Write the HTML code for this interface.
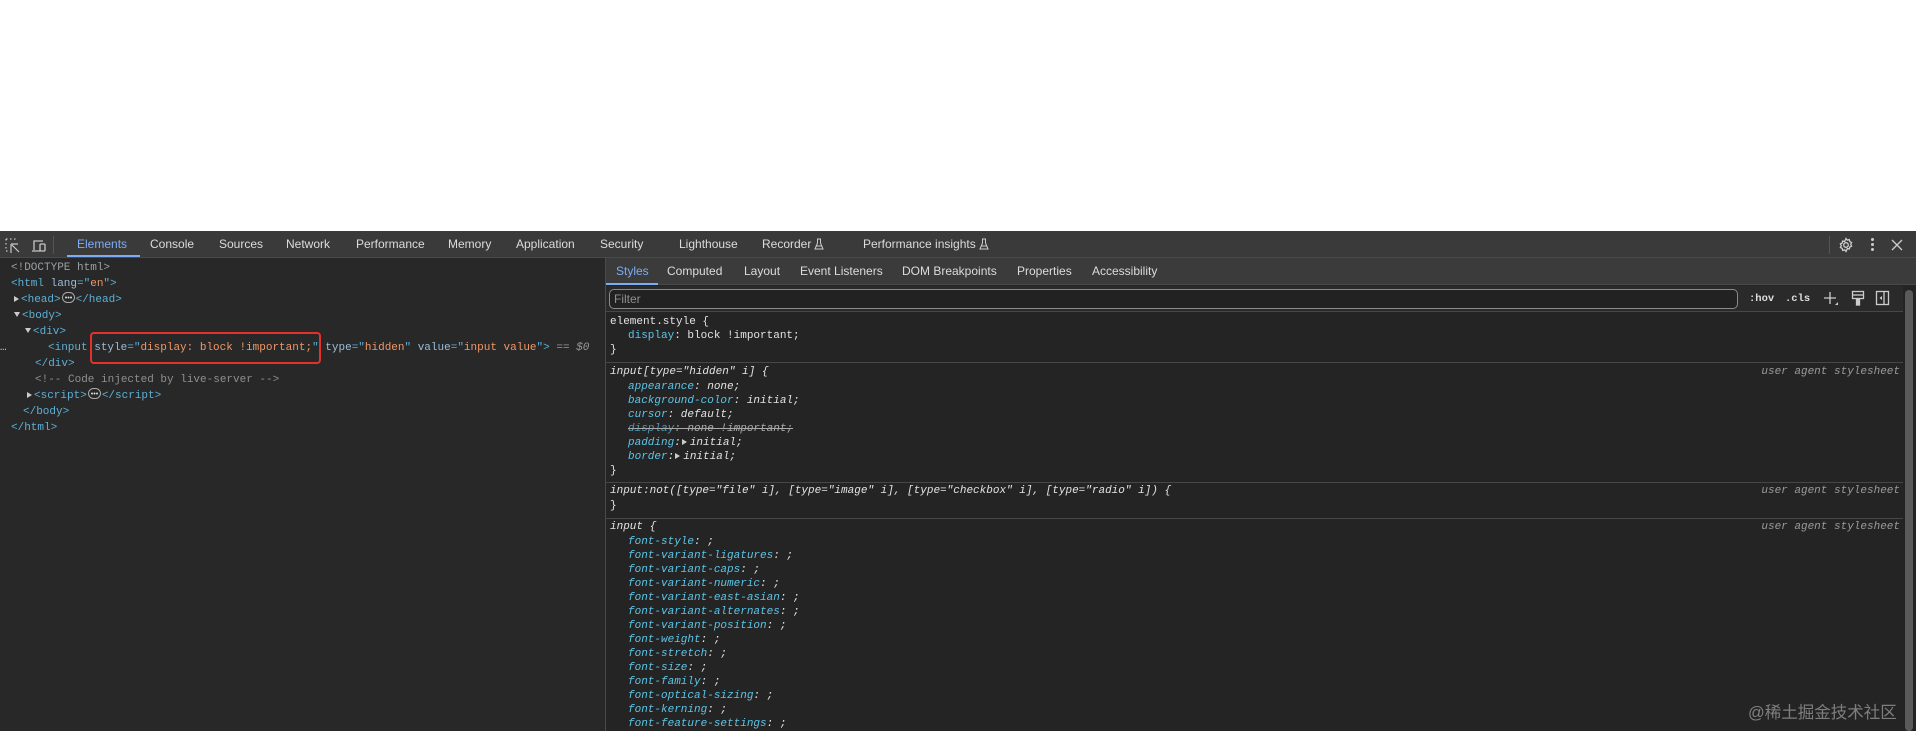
<!DOCTYPE html>
<html><head><meta charset="utf-8"><style>
*{margin:0;padding:0;box-sizing:border-box}
body{width:1916px;height:731px;background:#fff;position:relative;overflow:hidden;font-family:"Liberation Sans",sans-serif}
.a{position:absolute;white-space:pre}
#tb{position:absolute;left:0;top:231px;width:1916px;height:27px;background:#3a3a3a;border-bottom:1px solid #4a4a4a}
#left{position:absolute;left:0;top:258px;width:605px;height:473px;background:#282828}
#right{position:absolute;left:605px;top:258px;width:1311px;height:473px;background:#242424;border-left:1px solid #4a4a4a}
#sub{position:absolute;left:606px;top:258px;width:1310px;height:27px;background:#3b3b3b;border-bottom:1px solid #4a4a4a}
.tab{font-size:12px;color:#dcdcdc;top:237px}
.st{font-size:12px;color:#dcdcdc;top:264px}
.dm{font-family:"Liberation Mono",monospace;font-size:11px;line-height:16px;color:#5db0d7}
.an{color:#9bbbdc}.av{color:#f29766}.g{color:#999}
.cs{font-family:"Liberation Mono",monospace;font-size:11px;line-height:14px;color:#e3e3e3}
.p{color:#5cc5e8}
.i{font-style:italic}
.sep{position:absolute;left:606px;width:1297px;height:1px;background:#474747}
.ua{right:16px;color:#9a9a9a;font-style:italic}
.tri{display:inline-block;width:0;height:0;border-top:3.5px solid transparent;border-bottom:3.5px solid transparent;border-left:5px solid #ccc;margin:0 3px 0 1px}
.trd{display:inline-block;width:0;height:0;border-left:3.5px solid transparent;border-right:3.5px solid transparent;border-top:5px solid #ccc;margin-right:2px;vertical-align:1px}
.ell{display:inline-block;vertical-align:-1px;margin:0 1px}
.fl{display:inline-block;vertical-align:-2px;margin-left:3px}
</style></head><body>
<div id="tb"></div>
<div id="left"></div>
<div id="right"></div>
<div id="sub"></div>

<svg class="a" style="left:5px;top:238px" width="16" height="16" viewBox="0 0 16 16" fill="none" stroke="#c8c8c8" stroke-width="1.2"><path d="M1 1h2M5 1h2M9 1h2M1 1v2M1 5v2M1 9v2M1 13h2" stroke-dasharray="1.5 1.5"/><path d="M6 6v9M6 6h7M7 7l7 7"/></svg>
<svg class="a" style="left:31px;top:238px" width="16" height="16" viewBox="0 0 16 16" fill="none" stroke="#c8c8c8" stroke-width="1.3"><path d="M3 12V3h9M1 13h8"/><rect x="9" y="6" width="5" height="7" rx="1"/></svg>
<div class="a" style="left:53px;top:236px;width:1px;height:18px;background:#555"></div>
<div class="a tab" style="left:77px;color:#7cacf8">Elements</div>
<div class="a" style="left:67px;top:255px;width:73px;height:2px;background:#7cacf8"></div>
<div class="a tab" style="left:150px">Console</div>
<div class="a tab" style="left:219px">Sources</div>
<div class="a tab" style="left:286px">Network</div>
<div class="a tab" style="left:356px">Performance</div>
<div class="a tab" style="left:448px">Memory</div>
<div class="a tab" style="left:516px">Application</div>
<div class="a tab" style="left:600px">Security</div>
<div class="a tab" style="left:679px">Lighthouse</div>
<div class="a tab" style="left:762px">Recorder<svg class="fl" width="10" height="12" viewBox="0 0 10 12" fill="none" stroke="#ccc" stroke-width="1"><path d="M3 1h4M3.5 1v4L1 11h8L6.5 5V1M2.5 8h5"/></svg></div>
<div class="a tab" style="left:863px">Performance insights<svg class="fl" width="10" height="12" viewBox="0 0 10 12" fill="none" stroke="#ccc" stroke-width="1"><path d="M3 1h4M3.5 1v4L1 11h8L6.5 5V1M2.5 8h5"/></svg></div>
<div class="a" style="left:1829px;top:236px;width:1px;height:18px;background:#555"></div>
<svg class="a" style="left:1838px;top:237px" width="16" height="16" viewBox="0 0 16 16" fill="none" stroke="#ccc" stroke-width="1.3"><circle cx="8" cy="8" r="2.3"/><path d="M8 1.5l1.3 1.6 2-.5.5 2 1.8.9-.9 1.8.9 1.8-1.8.9-.5 2-2-.5L8 14.5l-1.3-1.6-2 .5-.5-2-1.8-.9.9-1.8-.9-1.8 1.8-.9.5-2 2 .5z"/></svg>
<div class="a" style="left:1871px;top:238px;width:3px;height:3px;background:#ccc;border-radius:2px;box-shadow:0 5px #ccc,0 10px #ccc"></div>
<svg class="a" style="left:1891px;top:239px" width="12" height="12" viewBox="0 0 12 12" stroke="#ccc" stroke-width="1.3"><path d="M1 1l10 10M11 1L1 11"/></svg>

<div class="a dm" style="left:11px;top:260px;color:#9aa0a6">&lt;!DOCTYPE html&gt;</div>
<div class="a dm" style="left:11px;top:276px">&lt;html <span class="an">lang</span>="<span class="av">en</span>"&gt;</div>
<div class="a dm" style="left:14px;top:292px"><span class="tri" style="margin:0 2px 0 0"></span>&lt;head&gt;<svg class="ell" width="13" height="11" viewBox="0 0 13 11"><rect x=".5" y=".5" width="12" height="10" rx="5" fill="none" stroke="#aaa"/><circle cx="4" cy="5.5" r="1" fill="#ddd"/><circle cx="6.5" cy="5.5" r="1" fill="#ddd"/><circle cx="9" cy="5.5" r="1" fill="#ddd"/></svg>&lt;/head&gt;</div>
<div class="a dm" style="left:14px;top:308px"><span class="trd"></span>&lt;body&gt;</div>
<div class="a dm" style="left:25px;top:324px"><span class="trd"></span>&lt;div&gt;</div>
<div class="a dm" style="left:0px;top:340px;color:#ccc">…</div>
<div class="a dm" style="left:48px;top:340px">&lt;input <span class="an">style</span>="<span class="av">display: block !important;</span>" <span class="an">type</span>="<span class="av">hidden</span>" <span class="an">value</span>="<span class="av">input value</span>"&gt; <span class="g">== <i>$0</i></span></div>
<div class="a" style="left:90px;top:332px;width:231px;height:32px;border:2px solid #e5312b;border-radius:4px"></div>
<div class="a dm" style="left:35px;top:356px">&lt;/div&gt;</div>
<div class="a dm" style="left:35px;top:372px;color:#8f8f8f">&lt;!-- Code injected by live-server --&gt;</div>
<div class="a dm" style="left:27px;top:388px"><span class="tri" style="margin:0 2px 0 0"></span>&lt;script&gt;<svg class="ell" width="13" height="11" viewBox="0 0 13 11"><rect x=".5" y=".5" width="12" height="10" rx="5" fill="none" stroke="#aaa"/><circle cx="4" cy="5.5" r="1" fill="#ddd"/><circle cx="6.5" cy="5.5" r="1" fill="#ddd"/><circle cx="9" cy="5.5" r="1" fill="#ddd"/></svg>&lt;/script&gt;</div>
<div class="a dm" style="left:23px;top:404px">&lt;/body&gt;</div>
<div class="a dm" style="left:11px;top:420px">&lt;/html&gt;</div>

<div class="a st" style="left:616px;color:#7cacf8">Styles</div>
<div class="a" style="left:606px;top:283px;width:52px;height:2px;background:#7cacf8"></div>
<div class="a st" style="left:667px">Computed</div>
<div class="a st" style="left:744px">Layout</div>
<div class="a st" style="left:800px">Event Listeners</div>
<div class="a st" style="left:902px">DOM Breakpoints</div>
<div class="a st" style="left:1017px">Properties</div>
<div class="a st" style="left:1092px">Accessibility</div>
<div class="a" style="left:606px;top:286px;width:1297px;height:26px;background:#2a2a2a;border-bottom:1px solid #474747"></div>
<div class="a" style="left:609px;top:289px;width:1129px;height:20px;border:1px solid #8a8a8a;border-radius:5px;background:#222;font-size:12px;color:#8f8f8f;padding:2px 4px">Filter</div>
<div class="a cs" style="left:1749px;top:292px;color:#ddd;font-weight:bold;font-size:10.5px">:hov</div>
<div class="a cs" style="left:1785px;top:292px;color:#ddd;font-weight:bold;font-size:10.5px">.cls</div>
<svg class="a" style="left:1823px;top:290px" width="16" height="16" viewBox="0 0 16 16" stroke="#ccc" stroke-width="1.3"><path d="M7 2v12M1 8h12"/><path d="M12 15l3-3v3z" fill="#ccc" stroke="none"/></svg>
<svg class="a" style="left:1851px;top:290px" width="14" height="16" viewBox="0 0 14 16" fill="none" stroke="#ccc" stroke-width="1.3"><rect x="1.5" y="1.5" width="11" height="7"/><path d="M2 5h10"/><rect x="5.5" y="9" width="3" height="6" fill="#ccc"/></svg>
<svg class="a" style="left:1875px;top:290px" width="15" height="16" viewBox="0 0 15 16" fill="none" stroke="#ccc" stroke-width="1.3"><rect x="1.5" y="1.5" width="12" height="13"/><path d="M9 2v12"/><path d="M7 6v4L4.5 8z" fill="#ccc" stroke="none"/></svg>
<div class="a" style="left:1905px;top:290px;width:8px;height:441px;background:#5a5a5a;border-radius:4px"></div>

<div class="a cs" style="left:610px;top:315px">element.style {</div>
<div class="a cs" style="left:628px;top:329px"><span class="p">display</span>: block !important;</div>
<div class="a cs" style="left:610px;top:343px">}</div>
<div class="sep" style="top:362px"></div>
<div class="a cs i" style="left:610px;top:365px">input[type="hidden" i] {</div>
<div class="a cs ua" style="top:365px">user agent stylesheet</div>
<div class="a cs i" style="left:628px;top:380px"><span class="p">appearance</span>: none;</div>
<div class="a cs i" style="left:628px;top:394px"><span class="p">background-color</span>: initial;</div>
<div class="a cs i" style="left:628px;top:408px"><span class="p">cursor</span>: default;</div>
<div class="a cs i" style="left:628px;top:422px;text-decoration:line-through;color:#aaa"><span class="p" style="color:#4a9ab8">display</span>: none !important;</div>
<div class="a cs i" style="left:628px;top:436px"><span class="p">padding</span>:<span class="tri"></span>initial;</div>
<div class="a cs i" style="left:628px;top:450px"><span class="p">border</span>:<span class="tri"></span>initial;</div>
<div class="a cs" style="left:610px;top:464px">}</div>
<div class="sep" style="top:482px"></div>
<div class="a cs i" style="left:610px;top:484px">input:not([type="file" i], [type="image" i], [type="checkbox" i], [type="radio" i]) {</div>
<div class="a cs ua" style="top:484px">user agent stylesheet</div>
<div class="a cs" style="left:610px;top:499px">}</div>
<div class="sep" style="top:518px"></div>
<div class="a cs i" style="left:610px;top:520px">input {</div>
<div class="a cs ua" style="top:520px">user agent stylesheet</div>
<div class="a cs i" style="left:628px;top:535px;line-height:14px"><span class="p">font-style</span>: ;
<span class="p">font-variant-ligatures</span>: ;
<span class="p">font-variant-caps</span>: ;
<span class="p">font-variant-numeric</span>: ;
<span class="p">font-variant-east-asian</span>: ;
<span class="p">font-variant-alternates</span>: ;
<span class="p">font-variant-position</span>: ;
<span class="p">font-weight</span>: ;
<span class="p">font-stretch</span>: ;
<span class="p">font-size</span>: ;
<span class="p">font-family</span>: ;
<span class="p">font-optical-sizing</span>: ;
<span class="p">font-kerning</span>: ;
<span class="p">font-feature-settings</span>: ;</div>

<div class="a" style="left:1748px;top:699px;font-family:'Liberation Sans','Noto Sans CJK SC',sans-serif;font-size:16.5px;color:rgba(200,200,200,0.55)">@稀土掘金技术社区</div>
</body></html>
